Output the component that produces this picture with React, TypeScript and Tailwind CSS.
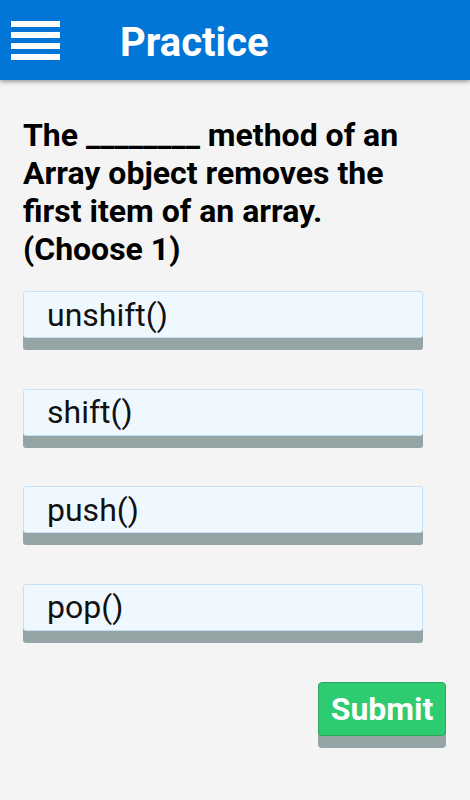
import React from 'react';

const options = ['unshift()', 'shift()', 'push()', 'pop()'];

export default function App() {
  return (
    <div className="min-h-[800px] bg-[#f4f4f4]" style={{ fontFamily: 'Roboto, "Noto Sans", sans-serif' }}>
      <header className="h-20 bg-[#0176d7] flex items-center shadow-[0_2px_4px_rgba(0,0,0,0.35)] relative">
        <div className="ml-[11px] w-[49px] flex flex-col gap-[5px]">
          <span className="block h-[6px] bg-white" />
          <span className="block h-[6px] bg-white" />
          <span className="block h-[6px] bg-white" />
          <span className="block h-[6px] bg-white" />
        </div>
        <h1 className="ml-[60px] mt-[6px] text-[40px] font-bold text-white leading-none">Practice</h1>
      </header>

      <main className="px-[23px] pt-9">
        <p className="text-[32px] leading-[38px] font-bold text-black">
          The ________ method of an Array object removes the first item of an array. (Choose 1)
        </p>

        <div className="mt-[23px] flex flex-col gap-[50.5px]">
          {options.map((o) => (
            <button
              key={o}
              className="w-[400px] h-[47px] flex items-center pl-[23px] pr-6 text-left text-[32px] text-[#111] bg-[#f0f8ff] border border-[#c6e0f5] rounded-[3px] shadow-[0_12px_0_0_#95a5a6]"
            >
              {o}
            </button>
          ))}
        </div>

        <div className="mt-[51px] flex justify-end mr-[1px]">
          <button className="w-[128px] h-[54px] bg-[#2ecc71] border border-[#27a85e] rounded-[4px] text-white text-[32px] font-bold shadow-[0_12px_0_0_#95a5a6]">
            Submit
          </button>
        </div>
      </main>
    </div>
  );
}
